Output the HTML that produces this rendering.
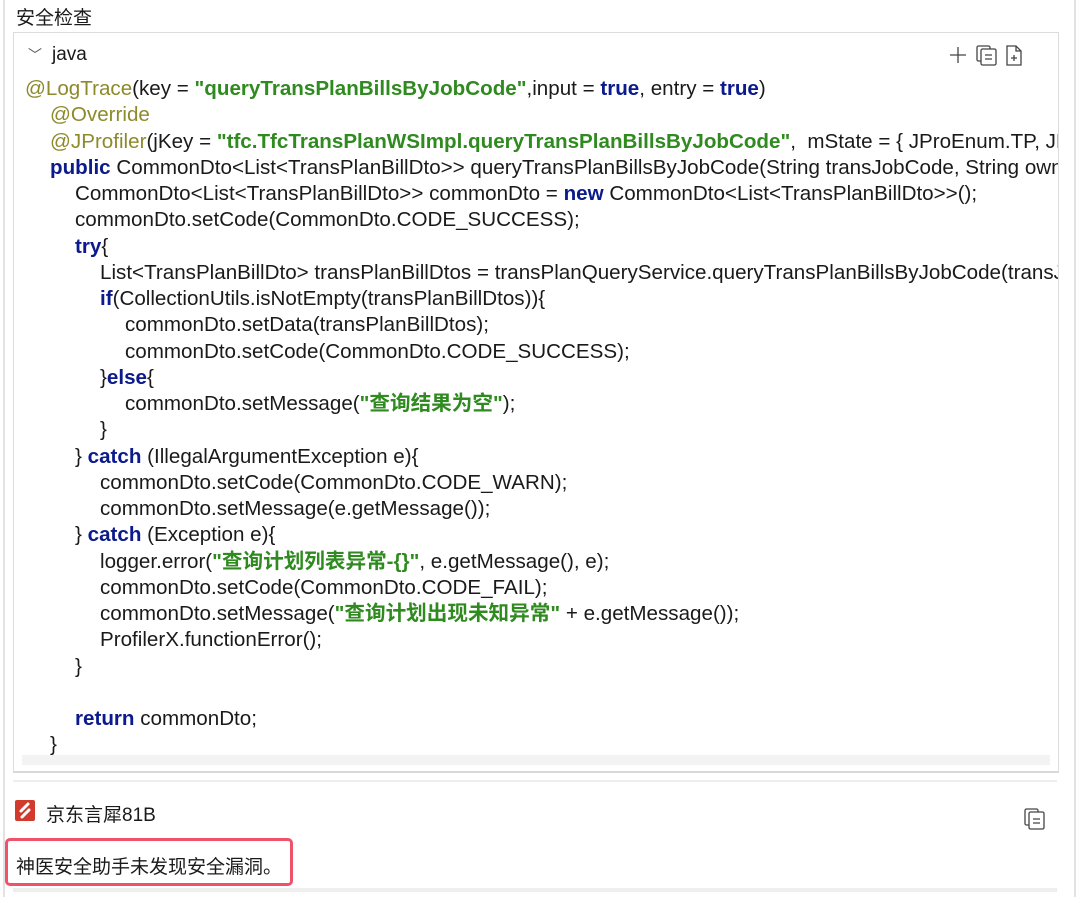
<!DOCTYPE html>
<html><head><meta charset="utf-8"><style>
body{margin:0;width:1080px;height:897px;background:#fff;position:relative;overflow:hidden;font-family:"Liberation Sans","Noto Sans CJK SC",sans-serif;color:#1a1a1a}
.vl{position:absolute;top:0;width:2px;height:897px;background:#e2e2e2}
.title{position:absolute;left:16px;top:3px;font-size:19px}
.box{position:absolute;left:13px;top:32px;width:1044px;height:738px;border:1px solid #dcdcdc;border-bottom:2px solid #d8d8d8;overflow:hidden;background:#fff}
.hdr{position:absolute;left:14px;top:11px;font-size:19px}
.code{position:absolute;left:11px;top:43px;font-size:20.6px;line-height:26.25px}
.code div{height:26.25px;white-space:pre}
.l1{padding-left:25px}.l2{padding-left:50px}.l3{padding-left:75px}.l4{padding-left:100px}
.a{color:#8d8a2b}.s{color:#2f8a1f;font-weight:bold}.k{color:#0b1a8c;font-weight:bold}
.sb{position:absolute;left:8px;top:722px;width:1028px;height:10px;background:#f3f3f3}
.sep{position:absolute;left:13px;top:780px;width:1044px;height:2px;background:#eeeeee}
.logo{position:absolute;left:15px;top:800px;width:20px;height:21px;background:#d13a2c;border-radius:2px}
.name{position:absolute;left:46px;top:800px;font-size:19px}
.red{position:absolute;left:5px;top:838px;width:282px;height:42px;border:3px solid #f05269;border-radius:5px}
.msg{position:absolute;left:16px;top:852px;font-size:19px}
.bot{position:absolute;left:13px;top:888px;width:1044px;height:4px;background:#eeeeee}
</style></head><body>
<div class="vl" style="left:3px"></div><div class="vl" style="left:1074px"></div>
<div class="title">安全检查</div>
<div class="box">
<div class="hdr"><span style="font-size:14px;color:#555;margin-right:10px">﹀</span>java</div>
<svg style="position:absolute;left:934px;top:10px" width="85" height="24" viewBox="0 0 85 24" fill="none" stroke="#444" stroke-width="1.3">
<path d="M2 12h16M10 4v16"/>
<rect x="29" y="3" width="13" height="15" rx="1.5"/><rect x="33" y="6" width="15" height="16" rx="1.5" fill="#fff"/><path d="M37 12h7M37 16h7"/>
<path d="M59 3h9l5 5v14h-14z M68 3v5h5"/><path d="M63 15h6M66 12v6"/>
</svg>
<div class="code">
<div><span class="a">@LogTrace</span>(key = <span class="s">"queryTransPlanBillsByJobCode"</span>,input = <span class="k">true</span>, entry = <span class="k">true</span>)</div>
<div class="l1"><span class="a">@Override</span></div>
<div class="l1"><span class="a">@JProfiler</span>(jKey = <span class="s">"tfc.TfcTransPlanWSImpl.queryTransPlanBillsByJobCode"</span>,  mState = { JProEnum.TP, JProEnum.FunctionError })</div>
<div class="l1"><span class="k">public</span> CommonDto&lt;List&lt;TransPlanBillDto&gt;&gt; queryTransPlanBillsByJobCode(String transJobCode, String ownerCode) {</div>
<div class="l2">CommonDto&lt;List&lt;TransPlanBillDto&gt;&gt; commonDto = <span class="k">new</span> CommonDto&lt;List&lt;TransPlanBillDto&gt;&gt;();</div>
<div class="l2">commonDto.setCode(CommonDto.CODE_SUCCESS);</div>
<div class="l2"><span class="k">try</span>{</div>
<div class="l3">List&lt;TransPlanBillDto&gt; transPlanBillDtos = transPlanQueryService.queryTransPlanBillsByJobCode(transJobCode);</div>
<div class="l3"><span class="k">if</span>(CollectionUtils.isNotEmpty(transPlanBillDtos)){</div>
<div class="l4">commonDto.setData(transPlanBillDtos);</div>
<div class="l4">commonDto.setCode(CommonDto.CODE_SUCCESS);</div>
<div class="l3">}<span class="k">else</span>{</div>
<div class="l4">commonDto.setMessage(<span class="s">"查询结果为空"</span>);</div>
<div class="l3">}</div>
<div class="l2">} <span class="k">catch</span> (IllegalArgumentException e){</div>
<div class="l3">commonDto.setCode(CommonDto.CODE_WARN);</div>
<div class="l3">commonDto.setMessage(e.getMessage());</div>
<div class="l2">} <span class="k">catch</span> (Exception e){</div>
<div class="l3">logger.error(<span class="s">"查询计划列表异常-{}"</span>, e.getMessage(), e);</div>
<div class="l3">commonDto.setCode(CommonDto.CODE_FAIL);</div>
<div class="l3">commonDto.setMessage(<span class="s">"查询计划出现未知异常"</span> + e.getMessage());</div>
<div class="l3">ProfilerX.functionError();</div>
<div class="l2">}</div>
<div> </div>
<div class="l2"><span class="k">return</span> commonDto;</div>
<div class="l1">}</div>
</div>
<div class="sb"></div>
</div>
<div class="sep"></div>
<div class="logo"><svg width="20" height="21" viewBox="0 0 20 21"><path d="M13 4 L6 11 M14 10 L7 17" stroke="#fff" stroke-width="3" stroke-linecap="round"/></svg></div>
<div class="name">京东言犀81B</div>
<svg style="position:absolute;left:1024px;top:807px" width="22" height="24" viewBox="0 0 22 24" fill="none" stroke="#444" stroke-width="1.3"><rect x="1" y="2" width="13" height="16" rx="1.5"/><rect x="5" y="5" width="15" height="17" rx="1.5" fill="#fff"/><path d="M9 12h7M9 16h7"/></svg>
<div class="red"></div>
<div class="msg">神医安全助手未发现安全漏洞。</div>
<div class="bot"></div>
</body></html>
